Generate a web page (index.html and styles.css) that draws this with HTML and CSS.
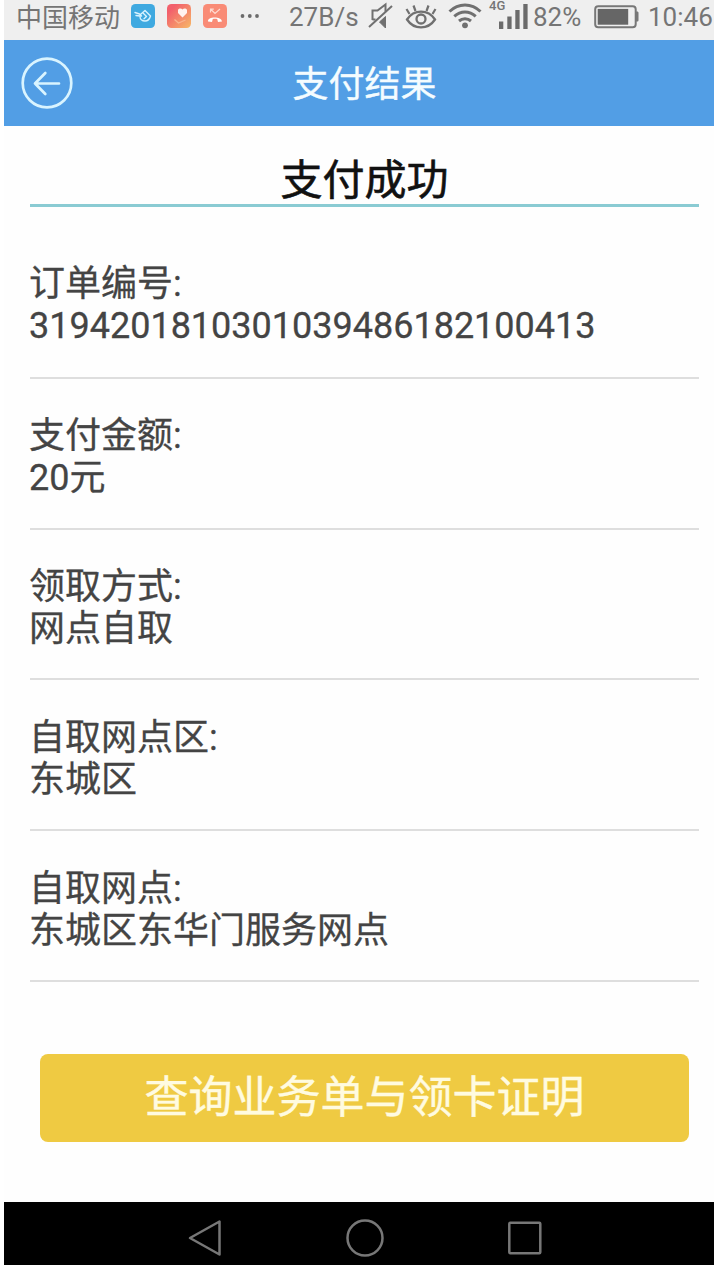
FILE: index.html
```html
<!DOCTYPE html>
<html lang="zh-CN">
<head>
    <meta charset="UTF-8">
    <meta name="viewport" content="width=device-width, initial-scale=1.0">
    <title>支付结果</title>
    <link rel="stylesheet" href="styles.css">
</head>
<body>
    <div class="phone">
        <div class="status-bar">
            <span class="carrier">中国移动</span>
            <div class="apps">
                <svg width="24" height="24" viewBox="0 0 24 24" fill="none">
                    <rect width="24" height="24" rx="4.5" fill="#3fa9e0"/>
                    <path d="M4 8.5l4.500 1.500 2 2M5 11.500l4 .5M9.500 10.500l4.500-4 5.500 5.500c-1 3.500-3 5-5.500 5-3 0-5-2-5-4.500zM12.500 9.500l3 3-2.500 2.200" stroke="#d9f3ff" stroke-width="1.4" stroke-linecap="round" stroke-linejoin="round"/>
                </svg>
                <svg width="24" height="24" viewBox="0 0 24 24" fill="none">
                    <defs>
                        <linearGradient id="warm" x1="0" y1="0" x2="1" y2="1">
                            <stop offset="0.2" stop-color="#f2606c"/>
                            <stop offset="1" stop-color="#f7b967"/>
                        </linearGradient>
                    </defs>
                    <rect width="24" height="24" rx="4.5" fill="url(#warm)"/>
                    <path d="M15.500 13.500L11 9V5.800C12 4 14.500 4 15.500 5.500 16.500 4 19 4 20 5.800V9z" fill="#fff3ee"/>
                    <path d="M7.500 15.500l4 3.500 7-3" stroke="#f9b590" stroke-width="1.300"/>
                </svg>
                <svg width="24" height="24" viewBox="0 0 24 24" fill="none">
                    <rect width="24" height="24" rx="4.5" fill="#f98b76"/>
                    <path d="M8 5.500l4 4 5-4.500M7.500 8.500V5.200h3.300" stroke="#ffd9cf" stroke-width="1.200"/>
                    <path d="M5 17.500c-.8-5.500 13.800-5.500 14 0l-4 .5-.8-3c-1.500-.5-3-.5-4.400 0l-.8 3z" fill="#fff"/>
                </svg>
            </div>
            <svg class="dots" width="20" height="6" viewBox="0 0 20 6" fill="#6b6b6b">
                <circle cx="2.500" cy="3" r="1.900"/>
                <circle cx="9.800" cy="3" r="1.900"/>
                <circle cx="17" cy="3" r="1.900"/>
            </svg>
            <span class="speed">27B/s</span>
            <svg class="mute" width="26" height="28" viewBox="0 0 26 28" fill="none" stroke="#707070" stroke-width="2">
                <path d="M1 25L24 4"/>
                <path d="M4.500 18V8.500h5L17.500 2.500v7M4.500 17.500h3"/>
                <path d="M11.500 20l6-5.500V26z" fill="#707070" stroke-width="1"/>
            </svg>
            <svg class="eye" width="32" height="28" viewBox="0 0 32 28" fill="none" stroke="#707070" stroke-width="2.300">
                <path d="M2 17.500c7-10.500 21-10.500 28 0-7 10.500-21 10.500-28 0z"/>
                <circle cx="16" cy="17" r="4.500"/>
                <path d="M4.500 12L1.500 7M10.500 9L8.500 3.500M21.500 9l2-5.500M27.500 12l3-5" stroke-width="2.200"/>
            </svg>
            <svg class="wifi" width="34" height="28" viewBox="0 0 34 28" fill="none" stroke="#707070" stroke-width="3">
                <path d="M1.500 10.500c9-8.700 22-8.700 31 0"/>
                <path d="M6.300 15.300c6.300-5.800 15.100-5.800 21.400 0"/>
                <path d="M11 20c3.500-3 8.500-3 12 0"/>
                <circle cx="17" cy="24.300" r="2.900" fill="#707070" stroke="none"/>
            </svg>
            <div class="signal">
                <span class="network">4G</span>
                <svg width="30" height="26" viewBox="0 0 30 26" fill="#6b6b6b">
                    <rect x="1" y="17.500" width="4.300" height="7.500"/>
                    <rect x="9.300" y="12.500" width="4.300" height="12.500"/>
                    <rect x="17.300" y="6" width="4.300" height="19"/>
                    <rect x="25.300" y="0" width="4.300" height="25"/>
                </svg>
            </div>
            <span class="percent">82%</span>
            <svg class="battery" width="45" height="24" viewBox="0 0 45 24">
                <rect x="1.200" y="1.200" width="40.500" height="21" rx="3" fill="none" stroke="#777" stroke-width="2"/>
                <rect x="3.700" y="3.900" width="30.500" height="15.800" fill="#666"/>
                <path d="M42 6.500h1c1 0 1.500.5 1.500 1.500v7c0 1-.5 1.500-1.500 1.500h-1z" fill="#777"/>
            </svg>
            <span class="clock">10:46</span>
        </div>

        <header class="header">
            <svg class="back" width="52" height="52" viewBox="0 0 52 52" fill="none" stroke="#d9f4ff" stroke-width="2.700" stroke-linecap="round" stroke-linejoin="round">
                <circle cx="26" cy="26" r="24.300"/>
                <path d="M38 26.500H14M24.300 16L14 26.500 24.300 37"/>
            </svg>
            <h1>支付结果</h1>
        </header>

        <main>
            <h2>支付成功</h2>
            <div class="item">
                <p>订单编号:</p>
                <p>3194201810301039486182100413</p>
            </div>
            <div class="item">
                <p>支付金额:</p>
                <p>20元</p>
            </div>
            <div class="item">
                <p>领取方式:</p>
                <p>网点自取</p>
            </div>
            <div class="item">
                <p>自取网点区:</p>
                <p>东城区</p>
            </div>
            <div class="item">
                <p>自取网点:</p>
                <p>东城区东华门服务网点</p>
            </div>
            <button type="button" class="query-button">查询业务单与领卡证明</button>
        </main>

        <nav class="nav-bar">
            <svg width="36" height="40" viewBox="0 0 36 40">
                <path d="M32.500 3.500v33L3 20z"/>
            </svg>
            <svg width="40" height="40" viewBox="0 0 40 40">
                <circle cx="20" cy="20" r="17.500"/>
            </svg>
            <svg width="36" height="40" viewBox="0 0 36 40">
                <rect x="2.300" y="4.800" width="31" height="30.500" rx="1"/>
            </svg>
        </nav>
    </div>
</body>
</html>
```
FILE: styles.css
```css
*, ::before, ::after {
    margin: 0;
    padding: 0;
    box-sizing: border-box;
}

body {
    background-color: #fff;
    font-family: Roboto, "Noto Sans CJK SC", sans-serif;
    color: #444;
    overflow: hidden;
}

svg {
    display: block;
    flex-shrink: 0;
}

.phone {
    display: flex;
    flex-direction: column;
    width: 721px;
    height: 1265px;
    margin-left: 4px;
    background-color: #fefefe;
}

.status-bar {
    display: flex;
    align-items: flex-start;
    height: 40px;
    padding-left: 12px;
    background-color: #efefef;
    color: #757575;
    font-size: 26px;
    line-height: 34px;
    white-space: nowrap;
}

.carrier {
    width: 115px;
    line-height: 36px;
}

.apps {
    display: flex;
    gap: 12px;
    margin-top: 4px;
}

.dots {
    margin: 13px 0 0 13px;
}

.speed {
    width: 79px;
    margin-left: 29px;
}

.mute {
    margin-top: 2px;
}

.eye {
    margin: 2px 0 0 11px;
}

.wifi {
    margin: 1px 0 0 11px;
}

.signal {
    position: relative;
    width: 30px;
    margin: 4px 0 0 16px;
}

.network {
    position: absolute;
    top: -6px;
    left: -9px;
    font-size: 13px;
    font-weight: 500;
    line-height: 15px;
}

.percent {
    width: 61px;
    margin-left: 5px;
}

.battery {
    margin-top: 5px;
}

.clock {
    margin-left: 9px;
}

.header {
    display: grid;
    grid-template-columns: 52px 1fr 52px;
    align-items: center;
    height: 86px;
    padding: 0 17px;
    background-color: #529ee5;
}

.header h1 {
    padding-bottom: 5px;
    color: #f4fcff;
    font-size: 36px;
    font-weight: 400;
    text-align: center;
    -webkit-text-stroke: 0.4px;
}

main {
    flex: 1;
    padding: 0 26px;
}

h2 {
    height: 81px;
    padding-top: 24px;
    border-bottom: 3px solid #8acbd3;
    color: #111;
    font-size: 42px;
    font-weight: 400;
    line-height: 62px;
    text-align: center;
    -webkit-text-stroke: 0.6px;
}

.item {
    height: 150.75px;
    padding-top: 36.5px;
    border-bottom: 2px solid #dedede;
    font-size: 36px;
    line-height: 42px;
    -webkit-text-stroke: 0.3px;
}

.item p {
    margin-left: -1px;
}

h2 + .item {
    height: 171.75px;
    padding-top: 56px;
}

.query-button {
    display: block;
    width: 649px;
    height: 88px;
    margin: 72px auto 0;
    padding-bottom: 8px;
    border: none;
    border-radius: 8px;
    background-color: #efca42;
    color: #fffbe0;
    font-family: inherit;
    font-size: 44px;
    cursor: pointer;
    -webkit-text-stroke: 0.4px;
}

.nav-bar {
    display: flex;
    justify-content: center;
    gap: 122px;
    height: 63px;
    padding-top: 16px;
    background-color: #000;
}

.nav-bar svg {
    fill: none;
    stroke: #777;
    stroke-width: 2.5;
    stroke-linejoin: round;
}
```
